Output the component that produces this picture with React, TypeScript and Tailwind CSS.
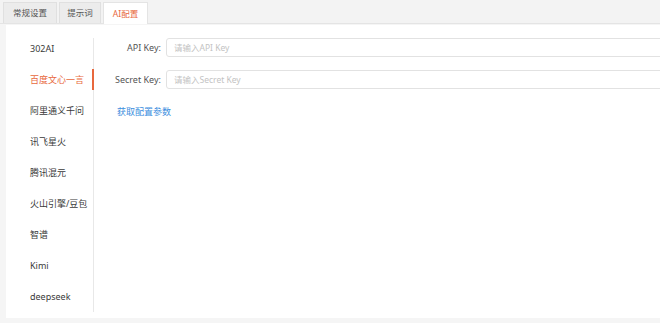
import React, { useState } from 'react';

const tabs = [
  { label: '常规设置', width: 'w-[54px]' },
  { label: '提示词', width: 'w-[42px]' },
  { label: 'AI配置', width: 'w-[45px]' },
];

const providers = [
  '302AI',
  '百度文心一言',
  '阿里通义千问',
  '讯飞星火',
  '腾讯混元',
  '火山引擎/豆包',
  '智谱',
  'Kimi',
  'deepseek',
];

const App: React.FC = () => {
  const [activeTab, setActiveTab] = useState<number>(2);
  const [activeProvider, setActiveProvider] = useState<number>(1);
  const [apiKey, setApiKey] = useState<string>('');
  const [secretKey, setSecretKey] = useState<string>('');

  return (
    <div className="w-[660px] h-[323px] overflow-hidden bg-[#f5f5f5] font-['Noto_Sans','Noto_Sans_CJK_SC',sans-serif] text-[9px]">
      {/* Tab bar */}
      <div className="h-[24px] flex items-end gap-[2px] pl-[3px] bg-[#f3f3f3] border-b border-[#e4e4e4]">
        {tabs.map((tab, i) => (
          <button
            key={tab.label}
            onClick={() => setActiveTab(i)}
            className={
              i === activeTab
                ? `${tab.width} h-[22px] -mb-px bg-white border border-b-0 border-[#e4e4e4] text-[#e8683d] text-[8.5px] leading-[20px] whitespace-nowrap`
                : `${tab.width} h-[21px] bg-[#ececec] border border-b-0 border-[#e0e0e0] text-[#555] text-[8.5px] leading-[20px] whitespace-nowrap`
            }
          >
            {tab.label}
          </button>
        ))}
      </div>

      {/* Content */}
      <div className="ml-[6px] h-[293px] mt-px bg-white flex">
        {/* Provider list */}
        <div className="w-[88px] shrink-0 mt-[13px] h-[274px] border-r border-[#e8e8e8]">
          {providers.map((p, i) => (
            <div
              key={p}
              onClick={() => setActiveProvider(i)}
              className={
                i === activeProvider
                  ? 'h-[21px] mb-[10px] pl-[24px] leading-[21px] whitespace-nowrap text-[#e8683d] border-r-2 border-[#e8683d] -mr-px cursor-pointer'
                  : 'h-[21px] mb-[10px] pl-[24px] leading-[21px] whitespace-nowrap text-[#3a3a3a] cursor-pointer'
              }
            >
              {p}
            </div>
          ))}
        </div>

        {/* Form */}
        <div className="flex-1 min-w-0 pt-[13px] pl-[9px]">
          <div className="flex items-center h-[19px] mb-[13px]">
            <label className="w-[62px] shrink-0 text-right text-[#555] pr-[4px] whitespace-nowrap">API Key:</label>
            <input
              value={apiKey}
              onChange={(e) => setApiKey(e.target.value)}
              placeholder="请输入API Key"
              className="ml-px w-[520px] shrink-0 h-[19px] px-[7px] border border-[#e2e2e2] rounded-[3px] text-[8.5px] placeholder:text-[#c3c3c3] outline-none"
            />
          </div>
          <div className="flex items-center h-[19px]">
            <label className="w-[62px] shrink-0 text-right text-[#555] pr-[4px] whitespace-nowrap">Secret Key:</label>
            <input
              value={secretKey}
              onChange={(e) => setSecretKey(e.target.value)}
              placeholder="请输入Secret Key"
              className="ml-px w-[520px] shrink-0 h-[19px] px-[7px] border border-[#e2e2e2] rounded-[3px] text-[8.5px] placeholder:text-[#c3c3c3] outline-none"
            />
          </div>
          <a href="#" className="inline-block mt-[17px] ml-[14px] text-[#3c8ede] leading-[12px]">
            获取配置参数
          </a>
        </div>
      </div>
    </div>
  );
};

export default App;
